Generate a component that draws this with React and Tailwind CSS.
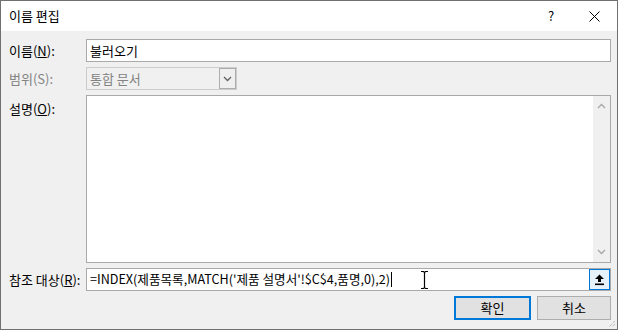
import React from 'react'

const font = { fontFamily: '"Noto Sans CJK KR", "Liberation Sans", sans-serif' }

const Label = ({ children, disabled, top }) => (
  <div className={`w-[77px] shrink-0 text-[13px] ${disabled ? 'text-[#838383]' : 'text-black'} ${top ? 'pt-[4px]' : 'flex items-center'}`}>
    {children}
  </div>
)

const Chevron = ({ up, color = '#a6a6a6' }) => (
  <svg width="9" height="6" viewBox="0 0 9 6">
    <path d={up ? 'M1 5 L4.5 1.5 L8 5' : 'M1 1 L4.5 4.5 L8 1'} fill="none" stroke={color} strokeWidth="1.3" />
  </svg>
)

const UploadIcon = () => (
  <svg width="11" height="12" viewBox="0 0 11 12">
    <path d="M5.5 0.5 L10 5 L7 5 L7 8 L4 8 L4 5 L1 5 Z" fill="#000" />
    <rect x="1" y="9.5" width="9" height="1.6" fill="#000" />
  </svg>
)

const IBeam = () => (
  <svg width="9" height="20" viewBox="0 0 9 20">
    <path d="M1 1.5 H3.5 L4.5 2.5 L5.5 1.5 H8 M4.5 2.5 V17.5 M1 18.5 H3.5 L4.5 17.5 L5.5 18.5 H8" fill="none" stroke="#fff" strokeWidth="3" />
    <path d="M1 1.5 H3.5 L4.5 2.5 L5.5 1.5 H8 M4.5 2.5 V17.5 M1 18.5 H3.5 L4.5 17.5 L5.5 18.5 H8" fill="none" stroke="#000" strokeWidth="1.2" />
  </svg>
)

const App = () => {
  return (
    <div className="w-[618px] h-[332px] bg-white" style={font}>
      <div className="w-[618px] h-[330px] border border-[#707070] flex flex-col bg-[#f0f0f0]">
        {/* title bar */}
        <div className="h-[30px] bg-white flex items-center pl-[8px] shrink-0">
          <span className="text-[13px] text-black flex-1">이름 편집</span>
          <span className="text-[13px] text-black w-[20px] text-center mr-[10px]">?</span>
          <span className="w-[46px] flex justify-center">
            <svg width="11" height="11" viewBox="0 0 11 11">
              <path d="M0.5 0.5 L10.5 10.5 M10.5 0.5 L0.5 10.5" stroke="#000" strokeWidth="1" />
            </svg>
          </span>
        </div>

        <div className="flex flex-col pl-[8px] pr-[6px] pt-[8px] gap-[5px] relative flex-1">
          {/* name */}
          <div className="flex h-[23px]">
            <Label>이름(<u>N</u>):</Label>
            <div className="flex-1 border border-[#a9a9a9] bg-white flex items-center pl-[3px] text-[13px] text-black">
              불러오기
            </div>
          </div>

          {/* scope */}
          <div className="flex h-[23px]">
            <Label disabled>범위(S):</Label>
            <div className="w-[151px] border border-[#cccccc] bg-[#f0f0f0] flex items-center text-[13px] text-[#838383]">
              <span className="flex-1 pl-[3px]">통합 문서</span>
              <span className="w-[17px] h-[21px] border border-[#adadad] bg-[#efefef] flex items-center justify-center">
                <Chevron color="#606060" />
              </span>
            </div>
          </div>

          {/* description */}
          <div className="flex h-[168px]">
            <Label top>설명(<u>O</u>):</Label>
            <div className="flex-1 border border-[#a9a9a9] bg-white flex justify-end">
              <div className="w-[17px] bg-[#f0f0f0] flex flex-col justify-between items-center py-[7px]">
                <Chevron up />
                <Chevron />
              </div>
            </div>
          </div>

          {/* reference */}
          <div className="flex h-[23px]">
            <Label>참조 대상(<u>R</u>):</Label>
            <div className="flex-1 border border-[#a9a9a9] bg-white flex items-center text-[12.6px] text-black relative">
              <span className="pl-[3px] whitespace-nowrap">=INDEX(제품목록,MATCH('제품 설명서'!$C$4,품명,0),2)</span>
              <span className="w-[1px] h-[15px] bg-black ml-[1px]"></span>
              <span className="absolute left-[333px] top-[1px]">
                <IBeam />
              </span>
              <span className="ml-auto w-[21px] h-[21px] border border-[#0078d7] bg-[#e5f1fb] flex items-center justify-center">
                <UploadIcon />
              </span>
            </div>
          </div>

          {/* buttons */}
          <div className="flex justify-end gap-[6px] h-[24px]">
            <button className="w-[77px] h-[24px] border-2 border-[#0078d7] bg-[#e1e1e1] text-[13px] text-black">확인</button>
            <button className="w-[74px] h-[24px] border border-[#adadad] bg-[#e1e1e1] text-[13px] text-black">취소</button>
          </div>

          {/* resize grip */}
          <svg className="absolute right-[1px] bottom-[1px]" width="10" height="10" viewBox="0 0 10 10">
            <path d="M9 3 L3 9 M9 6 L6 9" stroke="#a0a0a0" strokeWidth="1" strokeDasharray="1 1" />
          </svg>
        </div>
      </div>
    </div>
  )
}

export default App
